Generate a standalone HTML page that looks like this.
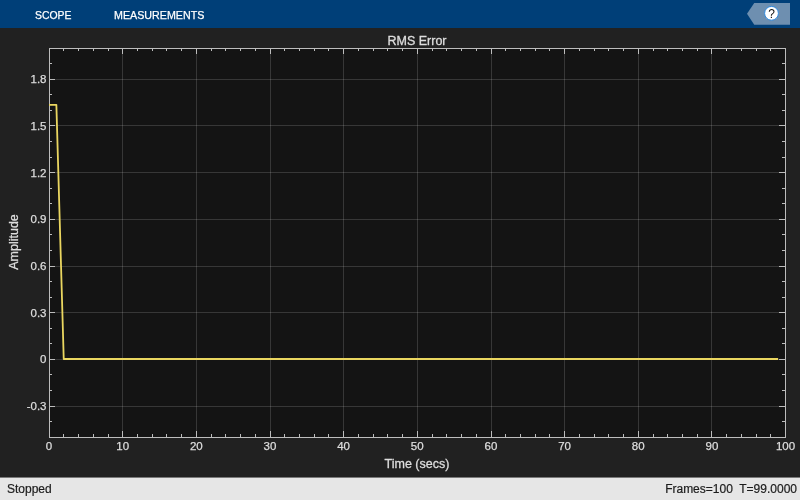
<!DOCTYPE html>
<html><head><meta charset="utf-8">
<style>
html,body{margin:0;padding:0;width:800px;height:500px;overflow:hidden;background:#212121;font-family:"Liberation Sans",sans-serif;}
#hdr{position:absolute;left:0;top:0;width:800px;height:28px;background:#003f78;}
.tab{position:absolute;top:9px;color:#fff;font-size:11px;-webkit-text-stroke:0.25px #fff;}
#help{position:absolute;left:747px;top:3px;}
#root{position:absolute;left:0;top:0;width:800px;height:500px;will-change:transform;}
#status{position:absolute;left:0;top:477px;width:800px;height:22px;border-top:1px solid #7a7a7a;background:#e6e6e6;color:#1c1c1c;font-size:12px;-webkit-text-stroke:0.2px #1c1c1c;}
</style></head><body>
<div id="root"><div id="hdr">
<div class="tab" style="left:34.7px;transform:scaleX(0.945);transform-origin:0 0">SCOPE</div>
<div class="tab" style="left:114.3px;transform:scaleX(0.972);transform-origin:0 0">MEASUREMENTS</div>
<svg id="help" width="44" height="22" viewBox="0 0 44 22">
<path d="M0 10.75 L7.25 0 H43 V21.75 H7.25 Z" fill="#6e8fb0"/>
<circle cx="24.5" cy="10.3" r="6.9" fill="#fff" stroke="#2f8ae0" stroke-width="1"/>
<text x="24.6" y="14.5" text-anchor="middle" font-family="Liberation Sans" font-size="12" fill="#111">?</text>
</svg>
</div>
<svg width="800" height="500" style="position:absolute;left:0;top:0">
<rect x="49" y="48" width="737" height="390" fill="#141414"/>
<g stroke="#fff" stroke-opacity="0.15" stroke-width="1"><line x1="122.5" y1="48.5" x2="122.5" y2="437.5"/><line x1="196.5" y1="48.5" x2="196.5" y2="437.5"/><line x1="270.5" y1="48.5" x2="270.5" y2="437.5"/><line x1="343.5" y1="48.5" x2="343.5" y2="437.5"/><line x1="417.5" y1="48.5" x2="417.5" y2="437.5"/><line x1="491.5" y1="48.5" x2="491.5" y2="437.5"/><line x1="564.5" y1="48.5" x2="564.5" y2="437.5"/><line x1="638.5" y1="48.5" x2="638.5" y2="437.5"/><line x1="711.5" y1="48.5" x2="711.5" y2="437.5"/><line x1="49.5" y1="406.5" x2="785.5" y2="406.5"/><line x1="49.5" y1="359.5" x2="785.5" y2="359.5"/><line x1="49.5" y1="312.5" x2="785.5" y2="312.5"/><line x1="49.5" y1="266.5" x2="785.5" y2="266.5"/><line x1="49.5" y1="219.5" x2="785.5" y2="219.5"/><line x1="49.5" y1="172.5" x2="785.5" y2="172.5"/><line x1="49.5" y1="125.5" x2="785.5" y2="125.5"/><line x1="49.5" y1="79.5" x2="785.5" y2="79.5"/></g>
<g stroke="#bdbdbd" stroke-width="1" fill="none">
<rect x="49.5" y="48.5" width="736.0" height="389.0"/>
<path d="M49.5 437.5v-6.5M49.5 48.5v5.5M63.5 437.5v-3.5M63.5 48.5v2.5M78.5 437.5v-3.5M78.5 48.5v2.5M93.5 437.5v-3.5M93.5 48.5v2.5M108.5 437.5v-3.5M108.5 48.5v2.5M122.5 437.5v-6.5M122.5 48.5v5.5M137.5 437.5v-3.5M137.5 48.5v2.5M152.5 437.5v-3.5M152.5 48.5v2.5M166.5 437.5v-3.5M166.5 48.5v2.5M181.5 437.5v-3.5M181.5 48.5v2.5M196.5 437.5v-6.5M196.5 48.5v5.5M211.5 437.5v-3.5M211.5 48.5v2.5M225.5 437.5v-3.5M225.5 48.5v2.5M240.5 437.5v-3.5M240.5 48.5v2.5M255.5 437.5v-3.5M255.5 48.5v2.5M270.5 437.5v-6.5M270.5 48.5v5.5M284.5 437.5v-3.5M284.5 48.5v2.5M299.5 437.5v-3.5M299.5 48.5v2.5M314.5 437.5v-3.5M314.5 48.5v2.5M328.5 437.5v-3.5M328.5 48.5v2.5M343.5 437.5v-6.5M343.5 48.5v5.5M358.5 437.5v-3.5M358.5 48.5v2.5M373.5 437.5v-3.5M373.5 48.5v2.5M387.5 437.5v-3.5M387.5 48.5v2.5M402.5 437.5v-3.5M402.5 48.5v2.5M417.5 437.5v-6.5M417.5 48.5v5.5M432.5 437.5v-3.5M432.5 48.5v2.5M446.5 437.5v-3.5M446.5 48.5v2.5M461.5 437.5v-3.5M461.5 48.5v2.5M476.5 437.5v-3.5M476.5 48.5v2.5M491.5 437.5v-6.5M491.5 48.5v5.5M505.5 437.5v-3.5M505.5 48.5v2.5M520.5 437.5v-3.5M520.5 48.5v2.5M535.5 437.5v-3.5M535.5 48.5v2.5M549.5 437.5v-3.5M549.5 48.5v2.5M564.5 437.5v-6.5M564.5 48.5v5.5M579.5 437.5v-3.5M579.5 48.5v2.5M594.5 437.5v-3.5M594.5 48.5v2.5M608.5 437.5v-3.5M608.5 48.5v2.5M623.5 437.5v-3.5M623.5 48.5v2.5M638.5 437.5v-6.5M638.5 48.5v5.5M653.5 437.5v-3.5M653.5 48.5v2.5M667.5 437.5v-3.5M667.5 48.5v2.5M682.5 437.5v-3.5M682.5 48.5v2.5M697.5 437.5v-3.5M697.5 48.5v2.5M711.5 437.5v-6.5M711.5 48.5v5.5M726.5 437.5v-3.5M726.5 48.5v2.5M741.5 437.5v-3.5M741.5 48.5v2.5M756.5 437.5v-3.5M756.5 48.5v2.5M770.5 437.5v-3.5M770.5 48.5v2.5M785.5 437.5v-6.5M785.5 48.5v5.5M49.5 437.5h2.5M785.5 437.5h-3.5M49.5 421.5h2.5M785.5 421.5h-3.5M49.5 406.5h5.5M785.5 406.5h-6.5M49.5 390.5h2.5M785.5 390.5h-3.5M49.5 374.5h2.5M785.5 374.5h-3.5M49.5 359.5h5.5M785.5 359.5h-6.5M49.5 343.5h2.5M785.5 343.5h-3.5M49.5 328.5h2.5M785.5 328.5h-3.5M49.5 312.5h5.5M785.5 312.5h-6.5M49.5 297.5h2.5M785.5 297.5h-3.5M49.5 281.5h2.5M785.5 281.5h-3.5M49.5 266.5h5.5M785.5 266.5h-6.5M49.5 250.5h2.5M785.5 250.5h-3.5M49.5 234.5h2.5M785.5 234.5h-3.5M49.5 219.5h5.5M785.5 219.5h-6.5M49.5 203.5h2.5M785.5 203.5h-3.5M49.5 188.5h2.5M785.5 188.5h-3.5M49.5 172.5h5.5M785.5 172.5h-6.5M49.5 157.5h2.5M785.5 157.5h-3.5M49.5 141.5h2.5M785.5 141.5h-3.5M49.5 125.5h5.5M785.5 125.5h-6.5M49.5 110.5h2.5M785.5 110.5h-3.5M49.5 94.5h2.5M785.5 94.5h-3.5M49.5 79.5h5.5M785.5 79.5h-6.5M49.5 63.5h2.5M785.5 63.5h-3.5M49.5 48.5h2.5M785.5 48.5h-3.5"/>
</g>
<path d="M49.0 104.9L56.37 104.9L63.73 359.0L778.13 359.0" fill="none" stroke="#ead660" stroke-width="1.8" stroke-linejoin="round"/>
<g fill="#dedede" stroke="#dedede" stroke-width="0.25" font-family="Liberation Sans" font-size="11.5">
<text x="46.5" y="409.9" text-anchor="end">-0.3</text><text x="46.5" y="363.2" text-anchor="end">0</text><text x="46.5" y="316.5" text-anchor="end">0.3</text><text x="46.5" y="269.8" text-anchor="end">0.6</text><text x="46.5" y="223.2" text-anchor="end">0.9</text><text x="46.5" y="176.5" text-anchor="end">1.2</text><text x="46.5" y="129.8" text-anchor="end">1.5</text><text x="46.5" y="83.1" text-anchor="end">1.8</text>
<text x="49.0" y="449.6" text-anchor="middle">0</text><text x="122.7" y="449.6" text-anchor="middle">10</text><text x="196.3" y="449.6" text-anchor="middle">20</text><text x="270.0" y="449.6" text-anchor="middle">30</text><text x="343.6" y="449.6" text-anchor="middle">40</text><text x="417.2" y="449.6" text-anchor="middle">50</text><text x="490.9" y="449.6" text-anchor="middle">60</text><text x="564.6" y="449.6" text-anchor="middle">70</text><text x="638.2" y="449.6" text-anchor="middle">80</text><text x="711.9" y="449.6" text-anchor="middle">90</text><text x="785.5" y="449.6" text-anchor="middle">100</text>
</g>
<text x="417" y="44.7" text-anchor="middle" fill="#dedede" stroke="#dedede" stroke-width="0.3" font-family="Liberation Sans" font-size="12.5">RMS Error</text>
<text x="417" y="468" text-anchor="middle" fill="#dedede" stroke="#dedede" stroke-width="0.3" font-family="Liberation Sans" font-size="12.5">Time (secs)</text>
<text transform="translate(17.5 242) rotate(-90)" text-anchor="middle" fill="#dedede" stroke="#dedede" stroke-width="0.3" font-family="Liberation Sans" font-size="12.5">Amplitude</text>
</svg>
<div id="status">
<div style="position:absolute;left:7px;top:4px">Stopped</div>
<div style="position:absolute;right:3px;top:4px;white-space:pre">Frames=100  T=99.0000</div>
</div></div>
</body></html>
